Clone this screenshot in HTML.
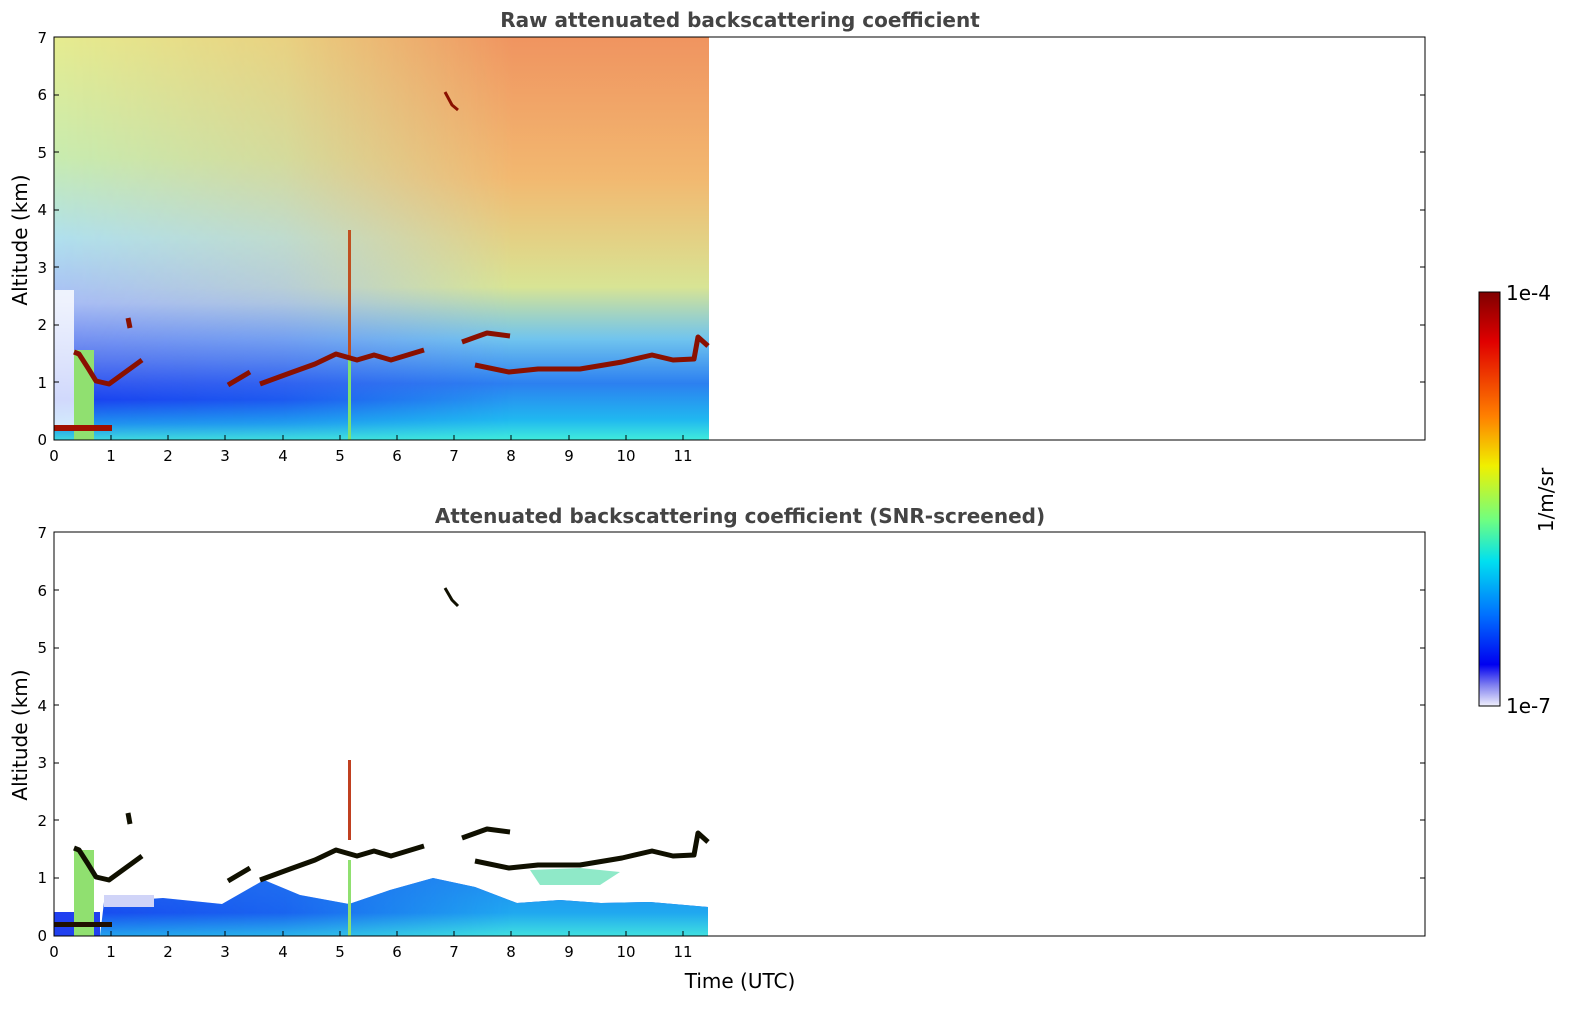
<!DOCTYPE html>
<html><head><meta charset="utf-8"><style>
html,body{margin:0;padding:0;background:#fff;}
svg{display:block;font-family:"DejaVu Sans","Liberation Sans",sans-serif;}
</style></head><body>
<svg width="1595" height="1020" viewBox="0 0 1595 1020" xmlns="http://www.w3.org/2000/svg">
<defs>
<linearGradient id="vl" x1="0" y1="0" x2="0" y2="1">
<stop offset="0" stop-color="#e6ec90"/>
<stop offset="0.3" stop-color="#c8ecb0"/>
<stop offset="0.5" stop-color="#b0e0ee"/>
<stop offset="0.66" stop-color="#a8bcf6"/>
<stop offset="0.8" stop-color="#5a78f0"/>
<stop offset="0.9" stop-color="#1a40f0"/>
<stop offset="0.96" stop-color="#2090f0"/>
<stop offset="1" stop-color="#40d8e0"/>
</linearGradient>
<linearGradient id="vr" x1="0" y1="0" x2="0" y2="1">
<stop offset="0" stop-color="#f09460"/>
<stop offset="0.35" stop-color="#f2b870"/>
<stop offset="0.62" stop-color="#d8e494"/>
<stop offset="0.75" stop-color="#70c4ee"/>
<stop offset="0.86" stop-color="#2c80f0"/>
<stop offset="0.95" stop-color="#20b8f0"/>
<stop offset="1" stop-color="#40ecdc"/>
</linearGradient>
<linearGradient id="hf" x1="0" y1="0" x2="1" y2="0">
<stop offset="0" stop-color="#fff" stop-opacity="0"/>
<stop offset="0.35" stop-color="#fff" stop-opacity="0.3"/>
<stop offset="0.7" stop-color="#fff" stop-opacity="1"/>
<stop offset="1" stop-color="#fff" stop-opacity="1"/>
</linearGradient>
<mask id="mr"><rect x="54" y="37" width="655" height="403" fill="url(#hf)"/></mask>
<linearGradient id="bb" x1="0" y1="0" x2="0" y2="1">
<stop offset="0" stop-color="#2060f0"/>
<stop offset="0.6" stop-color="#1848f0"/>
<stop offset="1" stop-color="#20a0f0"/>
</linearGradient>
<linearGradient id="bbr" x1="0" y1="0" x2="0" y2="1">
<stop offset="0" stop-color="#2090f0"/>
<stop offset="0.6" stop-color="#20a8f0"/>
<stop offset="1" stop-color="#40e0e0"/>
</linearGradient>
<mask id="mr2"><rect x="54" y="850" width="655" height="90" fill="url(#hf)"/></mask>
<linearGradient id="cb" x1="0" y1="0" x2="0" y2="1">
<stop offset="0" stop-color="#800000"/>
<stop offset="0.12" stop-color="#e00000"/>
<stop offset="0.3" stop-color="#ff8000"/>
<stop offset="0.42" stop-color="#f0f000"/>
<stop offset="0.55" stop-color="#70ff80"/>
<stop offset="0.65" stop-color="#00e0f0"/>
<stop offset="0.78" stop-color="#0070ff"/>
<stop offset="0.9" stop-color="#0000f0"/>
<stop offset="0.95" stop-color="#8080f0"/>
<stop offset="1" stop-color="#f0f0fc"/>
</linearGradient>
</defs>

<text x="740" y="27" text-anchor="middle" font-size="20" font-weight="bold" fill="#444">Raw attenuated backscattering coefficient</text>
<text x="740" y="523" text-anchor="middle" font-size="20" font-weight="bold" fill="#444">Attenuated backscattering coefficient (SNR-screened)</text>

<rect x="54" y="37" width="655" height="403" fill="url(#vl)"/>
<rect x="54" y="37" width="655" height="403" fill="url(#vr)" mask="url(#mr)"/>
<rect x="54" y="290" width="20" height="140" fill="#ffffff" opacity="0.8"/>
<rect x="74" y="350" width="20" height="90" fill="#90e070"/>
<rect x="54" y="425" width="58" height="6" fill="#a01000"/>
<rect x="348" y="230" width="3" height="210" fill="#c05020"/>
<rect x="348" y="360" width="3" height="80" fill="#80e070"/>
<g fill="none" stroke="#8a1000" stroke-width="5" stroke-linejoin="round">
<polyline points="74,352 79,354 88,368 96,381 109,384 142,360"/>
<polyline points="128,318 130,328"/>
<polyline points="228,385 250,372"/>
<polyline points="260,384 290,373 315,364 336,354 357,360 374,355 391,360 424,350"/>
<polyline points="462,342 487,333 510,336"/>
<polyline points="475,365 509,372 538,369 580,369 622,362 652,355 673,360 694,359 698,337 708,346"/>
<polyline points="445,92 452,105 458,110" stroke-width="3"/>
</g>

<path d="M104,902 L163,898 L222,904 L264,880 L300,895 L349,904 L390,890 L433,878 L475,887 L517,903 L560,900 L601,903 L650,902 L708,907 L708,936 L100,936 Z" fill="url(#bb)"/>
<path d="M104,902 L163,898 L222,904 L264,880 L300,895 L349,904 L390,890 L433,878 L475,887 L517,903 L560,900 L601,903 L650,902 L708,907 L708,936 L100,936 Z" fill="url(#bbr)" mask="url(#mr2)"/>
<path d="M530,870 L580,868 L620,872 L600,885 L540,885 Z" fill="#60e0b0" opacity="0.7"/>
<rect x="54" y="912" width="46" height="24" fill="#2040f0"/>
<rect x="74" y="850" width="20" height="86" fill="#90e070"/>
<rect x="54" y="922" width="58" height="5" fill="#201000"/>
<rect x="348" y="760" width="3" height="80" fill="#c04020"/>
<rect x="348" y="860" width="3" height="76" fill="#90e070"/>
<rect x="104" y="895" width="50" height="12" fill="#d0d4f8"/>
<g fill="none" stroke="#101000" stroke-width="5" stroke-linejoin="round">
<polyline points="74,848 79,850 88,864 96,877 109,880 142,856"/>
<polyline points="128,813 130,824"/>
<polyline points="228,881 250,868"/>
<polyline points="260,880 290,869 315,860 336,850 357,856 374,851 391,856 424,846"/>
<polyline points="462,838 487,829 510,832"/>
<polyline points="475,861 509,868 538,865 580,865 622,858 652,851 673,856 694,855 698,833 708,842"/>
<polyline points="445,588 452,600 458,606" stroke-width="3"/>
</g>

<rect x="54" y="37" width="1371" height="403" fill="none" stroke="#000" stroke-width="1"/>
<rect x="54" y="532" width="1371" height="404" fill="none" stroke="#000" stroke-width="1"/>

<g font-size="15" fill="#000">
<g text-anchor="end">
<text x="47" y="445">0</text><text x="47" y="388">1</text><text x="47" y="330">2</text><text x="47" y="273">3</text>
<text x="47" y="215">4</text><text x="47" y="158">5</text><text x="47" y="100">6</text><text x="47" y="43">7</text>
<text x="47" y="941">0</text><text x="47" y="883">1</text><text x="47" y="826">2</text><text x="47" y="768">3</text>
<text x="47" y="711">4</text><text x="47" y="653">5</text><text x="47" y="596">6</text><text x="47" y="538">7</text>
</g>
<g text-anchor="middle">
<text x="54" y="461">0</text><text x="111" y="461">1</text><text x="168" y="461">2</text><text x="225" y="461">3</text>
<text x="283" y="461">4</text><text x="340" y="461">5</text><text x="397" y="461">6</text><text x="454" y="461">7</text>
<text x="511" y="461">8</text><text x="569" y="461">9</text><text x="626" y="461">10</text><text x="683" y="461">11</text>
<text x="54" y="957">0</text><text x="111" y="957">1</text><text x="168" y="957">2</text><text x="225" y="957">3</text>
<text x="283" y="957">4</text><text x="340" y="957">5</text><text x="397" y="957">6</text><text x="454" y="957">7</text>
<text x="511" y="957">8</text><text x="569" y="957">9</text><text x="626" y="957">10</text><text x="683" y="957">11</text>
</g>
</g>
<g stroke="#000" stroke-width="1">
<path d="M54,382h5M54,325h5M54,267h5M54,210h5M54,152h5M54,95h5M1425,382h-5M1425,325h-5M1425,267h-5M1425,210h-5M1425,152h-5M1425,95h-5"/>
<path d="M54,878h5M54,820h5M54,763h5M54,705h5M54,648h5M54,590h5M1425,878h-5M1425,820h-5M1425,763h-5M1425,705h-5M1425,648h-5M1425,590h-5"/>
<path d="M111,440v-5M168,440v-5M225,440v-5M283,440v-5M340,440v-5M397,440v-5M454,440v-5M511,440v-5M569,440v-5M626,440v-5M683,440v-5"/>
<path d="M111,936v-5M168,936v-5M225,936v-5M283,936v-5M340,936v-5M397,936v-5M454,936v-5M511,936v-5M569,936v-5M626,936v-5M683,936v-5"/>
</g>

<text transform="translate(27,240) rotate(-90)" text-anchor="middle" font-size="20">Altitude (km)</text>
<text transform="translate(27,735) rotate(-90)" text-anchor="middle" font-size="20">Altitude (km)</text>
<text x="740" y="988" text-anchor="middle" font-size="20">Time (UTC)</text>

<rect x="1479" y="292" width="21" height="414" fill="url(#cb)" stroke="#000" stroke-width="1"/>
<text x="1506" y="300" font-size="20">1e-4</text>
<text x="1506" y="713" font-size="20">1e-7</text>
<text transform="translate(1553,500) rotate(-90)" text-anchor="middle" font-size="20">1/m/sr</text>
</svg>
</body></html>
